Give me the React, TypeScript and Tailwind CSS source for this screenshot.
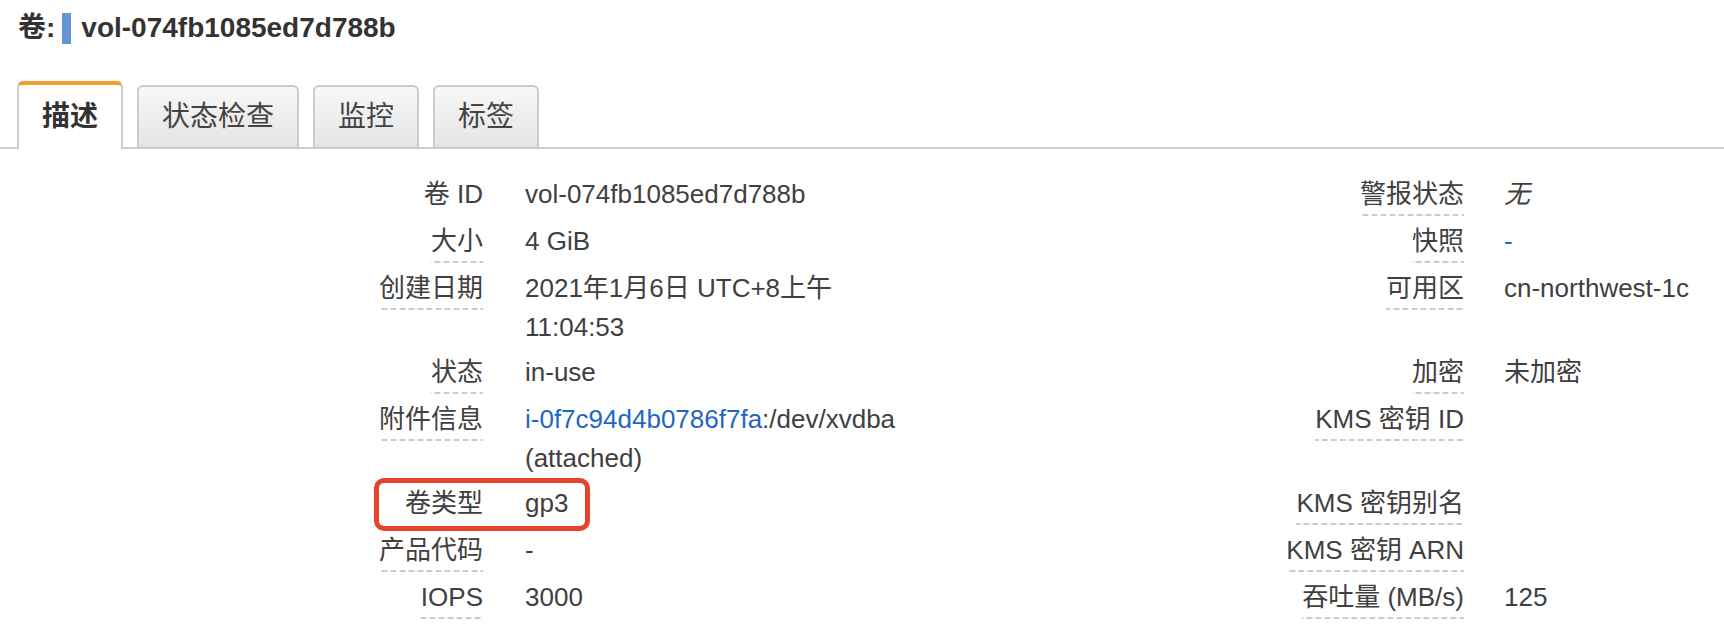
import type { ReactNode } from "react";

type Row = {
  label: string;
  value: ReactNode;
  plain?: boolean;
  rLabel: string;
  rValue?: ReactNode;
};

const dashed =
  "bg-[linear-gradient(to_right,#cccccc_6px,transparent_6px)] bg-[length:9px_2px] bg-repeat-x bg-bottom";

const rows: Row[] = [
  {
    label: "卷 ID",
    plain: true,
    value: "vol-074fb1085ed7d788b",
    rLabel: "警报状态",
    rValue: <i>无</i>,
  },
  {
    label: "大小",
    value: "4 GiB",
    rLabel: "快照",
    rValue: <span className="text-[#1f66c4]">-</span>,
  },
  {
    label: "创建日期",
    value: (
      <>
        <div>2021年1月6日 UTC+8上午</div>
        <div>11:04:53</div>
      </>
    ),
    rLabel: "可用区",
    rValue: "cn-northwest-1c",
  },
  { label: "状态", value: "in-use", rLabel: "加密", rValue: "未加密" },
  {
    label: "附件信息",
    value: (
      <>
        <div>
          <span className="text-[#1f66c4]">i-0f7c94d4b0786f7fa</span>:/dev/xvdba
        </div>
        <div>(attached)</div>
      </>
    ),
    rLabel: "KMS 密钥 ID",
  },
  { label: "卷类型", plain: true, value: "gp3", rLabel: "KMS 密钥别名" },
  { label: "产品代码", value: "-", rLabel: "KMS 密钥 ARN" },
  { label: "IOPS", value: "3000", rLabel: "吞吐量 (MB/s)", rValue: "125" },
];

const Label = ({ text, plain }: { text: string; plain?: boolean }) => (
  <div className="pb-[6px]">
    <span
      className={
        "ml-auto block w-fit leading-[39px] pb-[2px] " + (plain ? "" : dashed)
      }
    >
      {text}
    </span>
  </div>
);

const tabs = ["描述", "状态检查", "监控", "标签"];

export default function App() {
  return (
    <div className="relative w-[1724px] h-[644px] overflow-hidden bg-white text-[#404040] font-['Liberation_Sans','Noto_Sans_CJK_SC',sans-serif]">
      {/* titulo */}
      <div className="flex items-center pt-[10px] pl-[18px] h-[46px] text-[28px] font-bold text-[#333] leading-[36px]">
        <span>卷:</span>
        <span className="ml-[7px] mr-[10px] w-[9px] h-[31px] bg-[#6395d2]" />
        <span>vol-074fb1085ed7d788b</span>
      </div>

      {/* pestañas */}
      <div className="mt-[35px] flex items-end gap-[14px] pl-[17px] border-b-2 border-[#cccccc] h-[68px]">
        {tabs.map((t, i) =>
          i === 0 ? (
            <div
              key={t}
              className="-mb-[2px] h-[68px] flex items-center px-[23px] bg-white border-x-2 border-[#cccccc] border-t-4 border-t-[#f0a032] rounded-t-[6px] text-[28px] font-bold text-[#333]"
            >
              {t}
            </div>
          ) : (
            <div
              key={t}
              className="h-[62px] flex items-center px-[23px] bg-[linear-gradient(to_bottom,#f8f8f8,#e4e4e4)] border-2 border-b-0 border-[#cccccc] rounded-t-[6px] text-[28px] text-[#444]"
            >
              {t}
            </div>
          )
        )}
      </div>

      {/* detalles */}
      <div className="pt-[26px] grid grid-cols-[483px_498px_483px_1fr] text-[26px] leading-[39px]">
        {rows.map((r) => (
          <div key={r.label} className="contents">
            <Label text={r.label} plain={r.plain} />
            <div className="pl-[42px] pb-[6px]">{r.value}</div>
            <Label text={r.rLabel} />
            <div className="pl-[40px] pb-[6px]">{r.rValue}</div>
          </div>
        ))}
      </div>

      {/* marca roja */}
      <div className="absolute left-[374px] top-[478px] w-[216px] h-[53px] border-[5px] border-[#e6432b] rounded-[10px]" />
    </div>
  );
}
